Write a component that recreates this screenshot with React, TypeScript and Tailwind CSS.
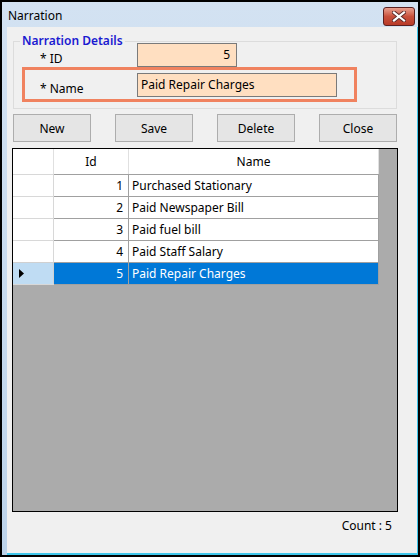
import React from "react";

const rows = [
  { id: 1, name: "Purchased Stationary" },
  { id: 2, name: "Paid Newspaper Bill" },
  { id: 3, name: "Paid fuel bill" },
  { id: 4, name: "Paid Staff Salary" },
  { id: 5, name: "Paid Repair Charges" },
];

export default function App() {
  return (
    <div
      className="w-[420px] h-[557px] bg-black p-[2px] text-[12px] text-black"
      style={{ fontFamily: '"Noto Sans", "Segoe UI", sans-serif' }}
    >
      <div className="flex flex-col h-full bg-gradient-to-b from-[#d3e2f2] to-[#bcd3ea]">
        {/* Title bar */}
        <div className="h-[25px] flex items-center justify-between pl-[6px] pr-[3px]">
          <span className="leading-[16px] mt-[3px]">Narration</span>
          <div className="w-[32px] h-[19px] mt-[4px] rounded-[3px] border border-[#5a2020] bg-gradient-to-b from-[#e8a090] via-[#c8503c] to-[#b83a28] flex items-center justify-center">
            <svg width="14" height="11" viewBox="0 0 14 11">
              <path d="M2 1.5 L12 9.5 M12 1.5 L2 9.5" stroke="#5a2a2a" strokeWidth="4" strokeLinecap="square" />
              <path d="M2 1.5 L12 9.5 M12 1.5 L2 9.5" stroke="#ffffff" strokeWidth="2.2" strokeLinecap="square" />
            </svg>
          </div>
        </div>
        {/* Body */}
        <div className="flex-1 ml-[5px] bg-[#f0f0f0] border-r border-b-2 border-[#3fc6ea] flex flex-col">
          {/* Group box */}
          <div className="relative mt-[14px] ml-[6px] w-[384px] h-[68px] border border-[#dcdcdc]">
            <span className="absolute -top-[9px] left-[6px] px-[2px] bg-[#f0f0f0] leading-[16px] text-[#1a1ad0] font-semibold">
              Narration Details
            </span>
            <div className="flex items-start mt-[1px] h-[24px]">
              <span className="pl-[26px] w-[123px] mt-[8px] leading-[16px]">* ID</span>
              <div className="w-[100px] h-[24px] bg-[#ffdfc1] border border-[#7a7a7a] flex items-center justify-end pr-[6px]">
                5
              </div>
            </div>
            <div className="ml-[8px] w-[335px] h-[35px] border-[3px] border-[#f0825f] flex items-start pt-[3px]">
              <span className="pl-[15px] w-[112px] mt-[8px] leading-[16px]">* Name</span>
              <div className="w-[200px] h-[24px] bg-[#ffdfc1] border border-[#7a7a7a] flex items-center pl-[3px]">
                Paid Repair Charges
              </div>
            </div>
          </div>
          {/* Buttons */}
          <div className="flex gap-[24px] mt-[5px] ml-[6px]">
            {["New", "Save", "Delete", "Close"].map((b) => (
              <button
                key={b}
                className="w-[78px] h-[28px] bg-[#e5e5e5] border border-[#adadad] flex items-center justify-center leading-[16px] pt-[1px]"
              >
                {b}
              </button>
            ))}
          </div>
          {/* Grid */}
          <div className="mt-[6px] ml-[5px] w-[386px] h-[364px] border border-black bg-[#ababab] flex flex-col">
            <div className="flex h-[25px]">
              <div className="w-[41px] bg-white border-r border-[#e0e0e0]" />
              <div className="w-[75px] bg-white border-r border-[#e0e0e0] flex items-center justify-center pt-[1px]">Id</div>
              <div className="w-[250px] bg-white border-r border-[#e0e0e0] flex items-center justify-center pt-[1px]">Name</div>
            </div>
            {rows.map((r) => {
              const sel = r.id === 5;
              return (
                <div key={r.id} className="flex h-[22px]">
                  <div
                    className={
                      sel
                        ? "w-[41px] bg-[#bfdcf3] border-t border-r border-[#d0d0d0] flex items-center pl-[6px]"
                        : "w-[41px] bg-white border-t border-r border-[#d8d8d8]"
                    }
                  >
                    {sel && (
                      <svg width="5" height="9" viewBox="0 0 5 9">
                        <path d="M0 0 L5 4.5 L0 9 Z" fill="#000" />
                      </svg>
                    )}
                  </div>
                  <div
                    className={
                      sel
                        ? "w-[75px] bg-[#0078d7] text-white border-t border-r border-[#a0a0a0] flex items-center justify-end pr-[5px]"
                        : "w-[75px] bg-white border-t border-r border-[#a0a0a0] flex items-center justify-end pr-[5px]"
                    }
                  >
                    {r.id}
                  </div>
                  <div
                    className={
                      sel
                        ? "w-[250px] bg-[#0078d7] text-white border-t border-r border-[#a0a0a0] flex items-center pl-[3px]"
                        : "w-[250px] bg-white border-t border-r border-[#a0a0a0] flex items-center pl-[3px]"
                    }
                  >
                    {r.name}
                  </div>
                </div>
              );
            })}
            <div className="flex h-[1px]">
              <div className="w-[41px] bg-[#d8d8d8]" />
              <div className="w-[325px] bg-[#a0a0a0]" />
            </div>
          </div>
          {/* Count */}
          <div className="mt-[6px] ml-[5px] w-[386px] text-right pr-[6px] leading-[16px]">Count : 5</div>
        </div>
      </div>
    </div>
  );
}
